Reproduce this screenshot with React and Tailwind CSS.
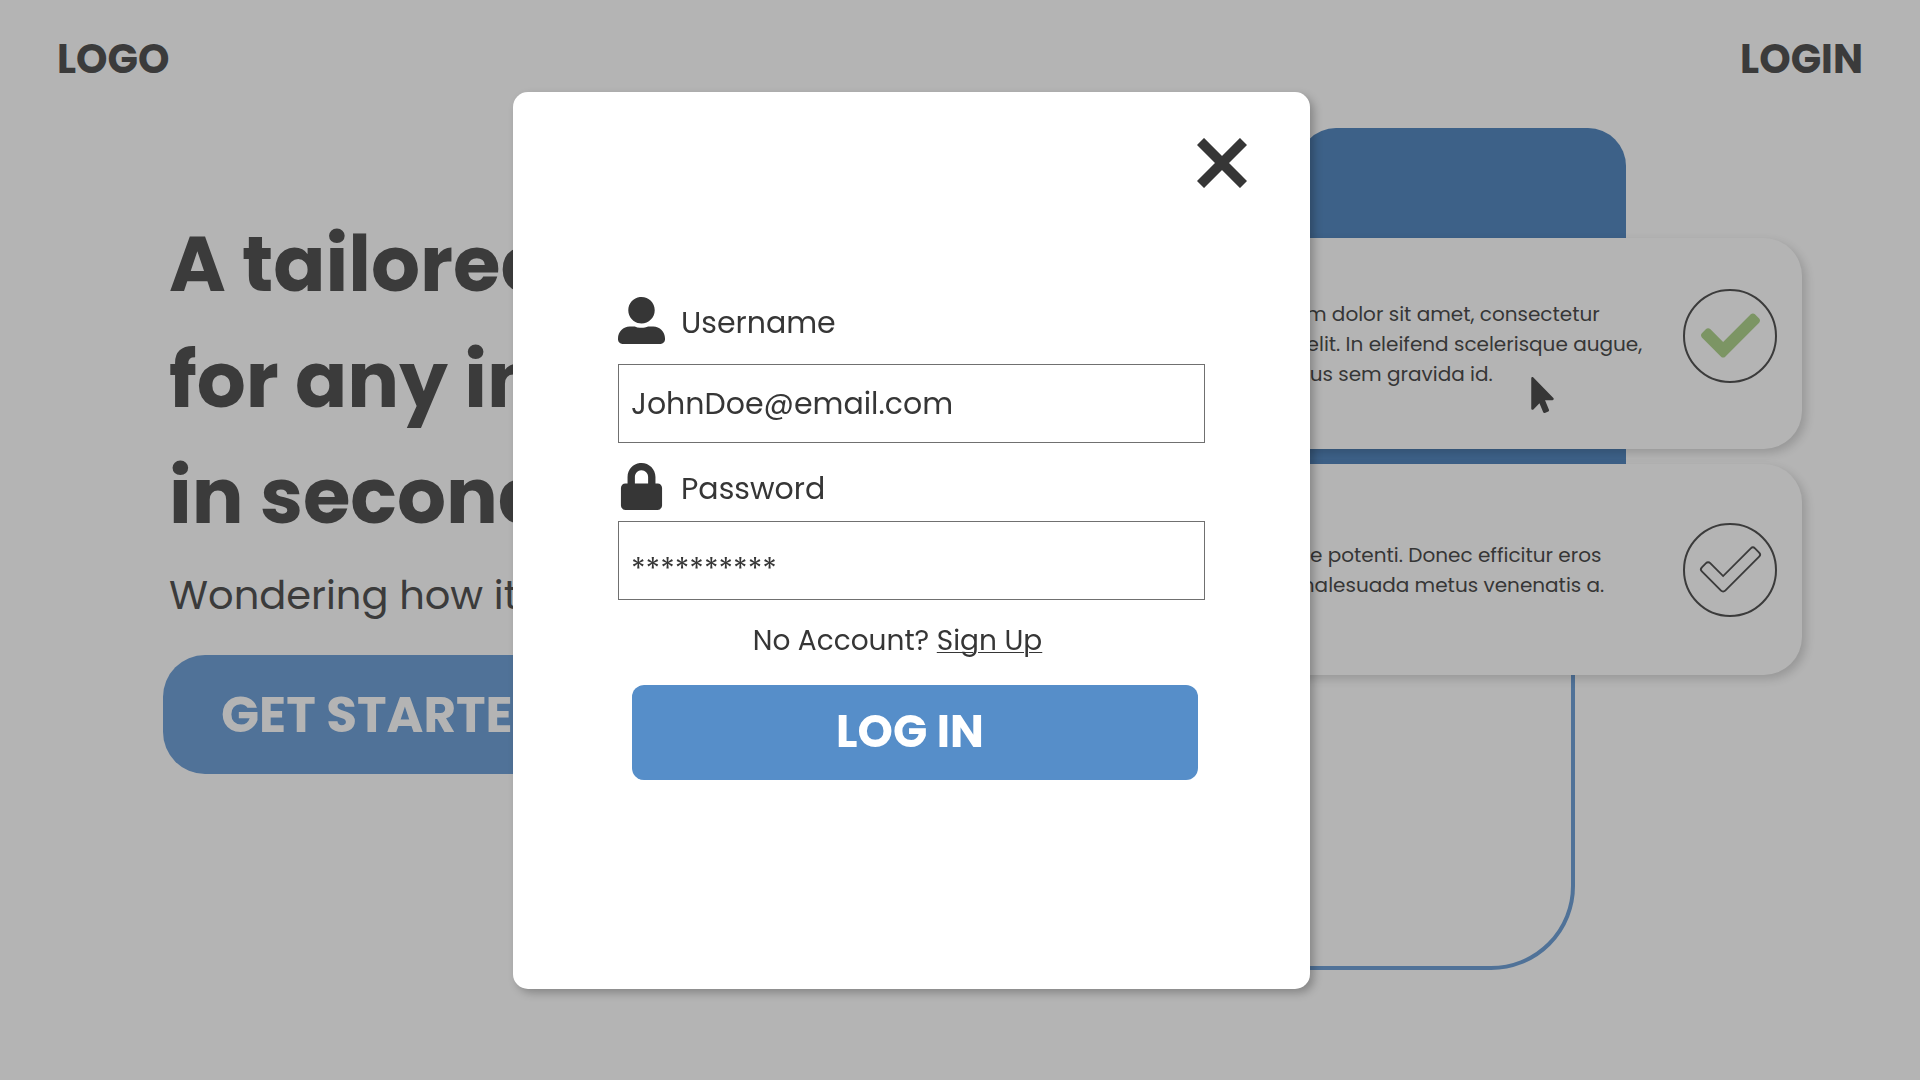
import React from "react";
import { FaCheck, FaLock, FaMousePointer, FaUserAlt } from "react-icons/fa";

const CHECK_PATH =
  "M173.898 439.404l-166.4-166.4c-9.997-9.997-9.997-26.206 0-36.204l36.203-36.204c9.997-9.998 26.207-9.998 36.204 0L192 312.69 432.095 72.596c9.997-9.997 26.207-9.997 36.204 0l36.203 36.204c9.997 9.997 9.997 26.206 0 36.204l-294.4 294.401c-9.998 9.997-26.207 9.997-36.204-.001z";

function CheckOutline() {
  return (
    <svg viewBox="0 0 512 512" className="size-[59px] overflow-visible" aria-hidden="true">
      <path d={CHECK_PATH} fill="none" stroke="currentColor" strokeWidth="16" />
    </svg>
  );
}

function FeatureCard({ lines, badgeClass = "", children }) {
  return (
    <article className="relative flex h-[211px] items-center justify-between rounded-[38px] bg-[#b4b4b4] pl-[95px] pr-[25px] shadow-[4px_4px_10px_rgba(0,0,0,0.16)]">
      <p className="whitespace-nowrap text-[20px] leading-[30px] text-[#363636]">
        {lines.map((line) => (
          <span key={line} className="block">
            {line}
          </span>
        ))}
      </p>
      <span
        className={`flex size-[94px] items-center justify-center rounded-full border-2 border-[#3b3b3b] text-[#3b3b3b] ${badgeClass}`}
      >
        {children}
      </span>
    </article>
  );
}

function Hero() {
  return (
    <section className="flex flex-col items-start pl-[169px] pt-[88px]">
      <h1 className="whitespace-nowrap text-[77px] font-bold leading-[116px]">
        <span className="block">A tailored</span>
        <span className="block">for any industry</span>
        <span className="block">in seconds</span>
      </h1>
      <p className="mt-[11px] whitespace-nowrap text-[40px] leading-[60px]">Wondering how it works?</p>
      <button
        type="button"
        className="-ml-[6px] mt-[30px] h-[119px] whitespace-nowrap rounded-[42px] bg-[#507298] px-[58px] text-[50px] font-bold text-[#b4b4b4]"
      >
        GET STARTED
      </button>
    </section>
  );
}

function Showcase() {
  return (
    <section className="relative w-[700px] pt-[120px]">
      <div className="absolute left-0 top-[60px] h-[792px] w-[473px] rounded-[84px] border-4 border-[#507298]" />
      <div className="absolute left-[196px] top-[10px] h-[400px] w-[328px] rounded-t-[38px] bg-[#3d6188]" />
      <div className="flex flex-col gap-[15px]">
        <FeatureCard
          badgeClass="mb-4"
          lines={[
            "Lorem ipsum dolor sit amet, consectetur",
            "adipiscing elit. In eleifend scelerisque augue,",
            "vitae rhoncus sem gravida id.",
          ]}
        >
          <FaCheck className="size-[59px] text-[#7c9564]" aria-hidden="true" />
        </FeatureCard>
        <FeatureCard
          lines={["Suspendisse potenti. Donec efficitur eros", "eget velit malesuada metus venenatis a."]}
        >
          <CheckOutline />
        </FeatureCard>
      </div>
      <FaMousePointer
        className="absolute left-[429px] top-[259px] h-9 w-[23px] text-[#363636]"
        aria-hidden="true"
      />
    </section>
  );
}

function LoginDialog() {
  const label = "flex h-[47px] items-center gap-4 text-[30px]";
  const field =
    "h-[79px] w-full border border-[#707070] bg-white px-3 text-[30px] text-[#363636] outline-none";
  return (
    <div className="fixed inset-0 flex items-center justify-center pr-[97px]">
      <div
        role="dialog"
        aria-modal="true"
        aria-label="Log in"
        className="w-[797px] rounded-[15px] bg-white px-[105px] pb-[209px] pt-[46px] text-[#363636] shadow-[4px_4px_8px_rgba(0,0,0,0.25)]"
      >
        <div className="flex justify-end">
          <button type="button" aria-label="Close" className="-mr-[42px] size-[50px]">
            <svg viewBox="0 0 50 50" className="size-[50px]" aria-hidden="true">
              <path d="M3.5 3.5L46.5 46.5M46.5 3.5L3.5 46.5" stroke="currentColor" strokeWidth="10" />
            </svg>
          </button>
        </div>
        <form className="mt-[109px] flex flex-col" onSubmit={(e) => e.preventDefault()}>
          <label htmlFor="username" className={label}>
            <FaUserAlt className="size-[47px]" aria-hidden="true" />
            <span className="pt-1">Username</span>
          </label>
          <input
            id="username"
            type="text"
            defaultValue="JohnDoe@email.com"
            className={`${field} mt-5 pt-[2px]`}
          />
          <label htmlFor="password" className={`${label} mt-5`}>
            <FaLock className="size-[47px]" aria-hidden="true" />
            <span className="pt-1">Password</span>
          </label>
          <input
            id="password"
            type="text"
            defaultValue="**********"
            className={`${field} mt-[11px] pt-5`}
          />
          <p className="mr-7 mt-5 text-center text-[28px] leading-[42px]">
            No Account?{" "}
            <a href="#signup" className="underline decoration-1 underline-offset-2">
              Sign Up
            </a>
          </p>
          <button
            type="submit"
            className="ml-[14px] mr-[7px] mt-[23px] h-[95px] rounded-xl bg-[#568ec9] pr-[10px] text-[45px] font-bold text-white"
          >
            LOG IN
          </button>
        </form>
      </div>
    </div>
  );
}

export default function App() {
  return (
    <div className="min-h-screen overflow-hidden bg-[#b4b4b4] font-[Poppins,Inter,sans-serif] text-[#3b3b3b]">
      <header className="flex h-[118px] items-center justify-between px-[57px] text-[40px] font-bold">
        <a href="#home">LOGO</a>
        <a href="#login">LOGIN</a>
      </header>
      <main className="flex justify-between pr-[118px]">
        <Hero />
        <Showcase />
      </main>
      <LoginDialog />
    </div>
  );
}
